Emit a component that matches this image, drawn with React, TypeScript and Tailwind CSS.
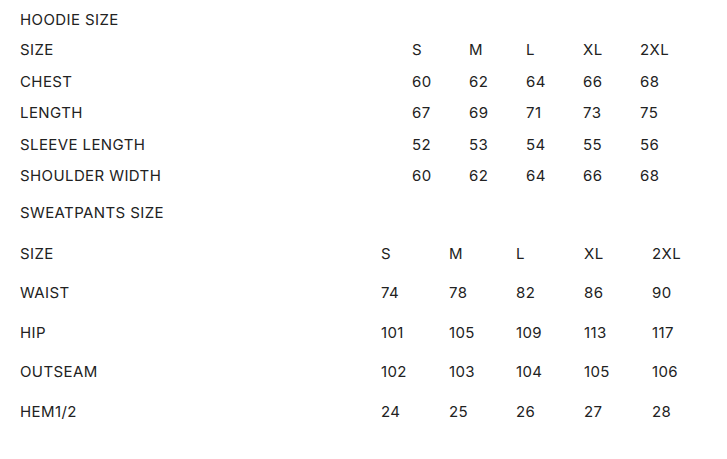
import React from "react";

const hoodie = [
  ["SIZE", "S", "M", "L", "XL", "2XL"],
  ["CHEST", "60", "62", "64", "66", "68"],
  ["LENGTH", "67", "69", "71", "73", "75"],
  ["SLEEVE LENGTH", "52", "53", "54", "55", "56"],
  ["SHOULDER WIDTH", "60", "62", "64", "66", "68"],
];

const pants = [
  ["SIZE", "S", "M", "L", "XL", "2XL"],
  ["WAIST", "74", "78", "82", "86", "90"],
  ["HIP", "101", "105", "109", "113", "117"],
  ["OUTSEAM", "102", "103", "104", "105", "106"],
  ["HEM1/2", "24", "25", "26", "27", "28"],
];

export default function App() {
  return (
    <div
      className="w-[727px] h-[459px] bg-white text-[#222] text-[15px] tracking-[0.4px] leading-none pl-[20px] pt-[11px]"
      style={{ fontFamily: "Inter, 'Open Sans', sans-serif" }}
    >
      <div className="h-[16px] flex items-center">HOODIE SIZE</div>
      <div className="mt-[7px]">
        {hoodie.map((r, i) => (
          <div key={i} className="grid grid-cols-[392px_57px_57px_57px_57px_57px] h-[31.5px] items-center">
            {r.map((c, j) => (
              <div key={j}>{c}</div>
            ))}
          </div>
        ))}
      </div>
      <div className="h-[16px] flex items-center mt-[13px]">SWEATPANTS SIZE</div>
      <div className="mt-[13px]">
        {pants.map((r, i) => (
          <div key={i} className="grid grid-cols-[361px_68px_67px_68px_68px_68px] h-[39.5px] items-center">
            {r.map((c, j) => (
              <div key={j}>{c}</div>
            ))}
          </div>
        ))}
      </div>
    </div>
  );
}
